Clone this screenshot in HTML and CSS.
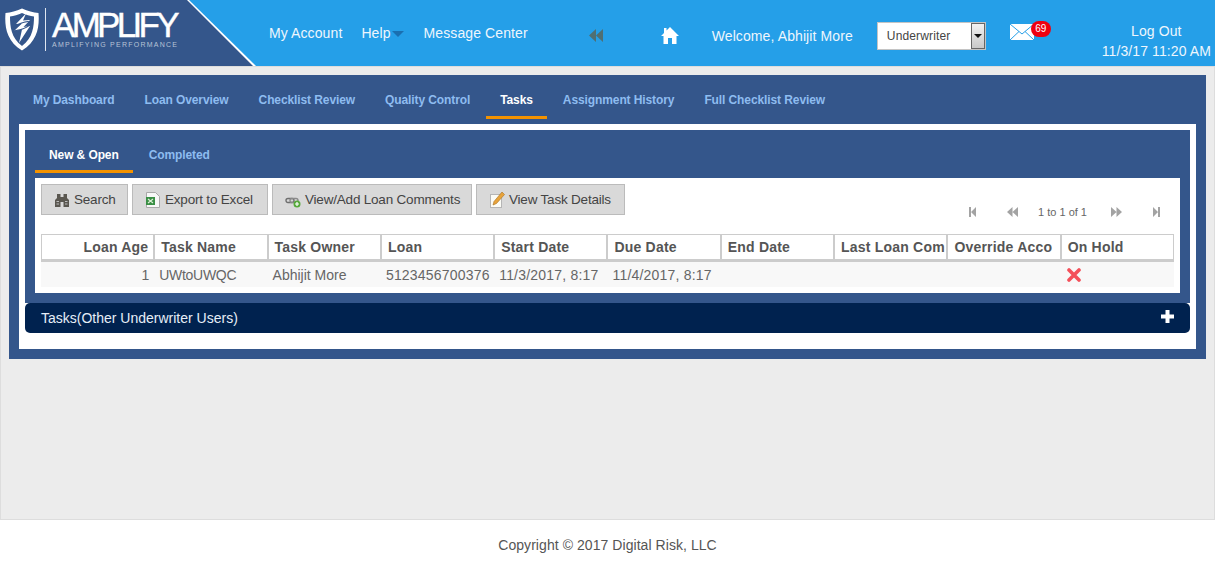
FILE: index.html
```html
<!DOCTYPE html>
<html lang="en">
<head>
    <meta charset="UTF-8">
    <meta name="viewport" content="width=device-width, initial-scale=1.0">
    <title>Amplify - Tasks</title>
    <link rel="stylesheet" href="styles.css">
</head>
<body>
    <header class="topbar">
        <div class="brand">
            <div class="brand-inner">
                <svg class="shield" viewBox="0 0 34 43" width="34" height="43">
                    <path d="M17 .5 C23 3 28 4.500 33.500 5 C34.500 18 33 33 17 42.500 C1 33 -.5 18 .5 5 C6 4.500 11 3 17 .5 Z" fill="#fff"/>
                    <path d="M17 5 C13 7 9 8 5 8.500 C5 18 6 30 17 38 C28 30 29 18 29 8.500 C25 8 21 7 17 5 Z" fill="#34568b"/>
                    <path d="M21 5.500 L11 16 L17 15.500 L9 23 L17 21.500 L14 35 L25 18 L18.500 19 L25 12 L18 12.500 Z" fill="#fff"/>
                    <ellipse cx="17" cy="18" rx="9" ry="3" transform="rotate(-22 17 18)" fill="none" stroke="#34568b" stroke-width="1"/>
                </svg>
                <span class="brand-rule"></span>
                <div class="brand-text">
                    <div class="wordmark">AMPLIFY</div>
                    <div class="tagline">AMPLIFYING PERFORMANCE</div>
                </div>
            </div>
        </div>
        <nav class="topnav">
            <a class="account">My Account</a>
            <a class="help">Help</a>
            <span class="help-arrow"></span>
            <a class="messages">Message Center</a>
        </nav>
        <svg class="collapse" viewBox="0 0 14 13" width="14" height="13">
            <path d="M7 0 V13 L0 6.500 Z M14 0 V13 L7 6.500 Z" fill="#4f6f73"/>
        </svg>
        <svg class="home" viewBox="0 0 18 17" width="18" height="17">
            <path d="M9 0 L18 9 H15.500 V17 H11 V11 H7 V17 H2.500 V9 H0 L3 6 V1 H5.500 V3.500 Z" fill="#fff"/>
        </svg>
        <span class="welcome">Welcome, Abhijit More</span>
        <div class="role-select">
            <span class="role-value">Underwriter</span>
            <span class="role-arrow"></span>
        </div>
        <div class="mail">
            <svg viewBox="0 0 24 16" width="24" height="16">
                <rect width="24" height="16" fill="#fff"/>
                <path d="M0 0 L12 10 L24 0 M0 16 L9 7.500 M24 16 L15 7.500" fill="none" stroke="#259fe8" stroke-width="1"/>
            </svg>
            <span class="badge">69</span>
        </div>
        <div class="session">
            <div class="logout">Log Out</div>
            <div class="clock">11/3/17 11:20 AM</div>
        </div>
    </header>

    <main class="page">
        <section class="panel">
            <ul class="tabs">
                <li>My Dashboard</li>
                <li>Loan Overview</li>
                <li>Checklist Review</li>
                <li>Quality Control</li>
                <li class="active">Tasks</li>
                <li>Assignment History</li>
                <li>Full Checklist Review</li>
            </ul>
            <div class="panel-body">
                <div class="subpanel">
                    <ul class="tabs subtabs">
                        <li class="active">New &amp; Open</li>
                        <li>Completed</li>
                    </ul>
                    <div class="content">
                        <div class="toolbar">
                            <button class="btn btn-search">
                                <svg viewBox="0 0 16 17" width="16" height="17">
                                    <path d="M3 3 H6.500 V6 H9.500 V3 H13 V7 L15 9 V16 H9.500 V11 H6.500 V16 H1 V9 L3 7 Z" fill="#5a5750"/>
                                    <path d="M2.500 10.500 H5 M11 10.500 H13.500 M2.500 13 H5 M11 13 H13.500" stroke="#bdbdbd" stroke-width="1"/>
                                </svg>
                                Search
                            </button>
                            <button class="btn btn-export">
                                <svg viewBox="0 0 16 17" width="16" height="17">
                                    <path d="M1.500 1.500 H10.500 L14.500 5.500 V16.500 H1.500 Z" fill="#f7f7f7" stroke="#a9a9a9"/>
                                    <rect x="1" y="6" width="9" height="8" fill="#3a8f45"/>
                                    <path d="M3 8 L8 12 M8 8 L3 12" stroke="#dff0d8" stroke-width="1.200"/>
                                </svg>
                                Export to Excel
                            </button>
                            <button class="btn btn-comments">
                                <svg viewBox="0 0 16 17" width="16" height="17">
                                    <rect x="1" y="7.500" width="8" height="4" rx="2" fill="none" stroke="#6e6e6e" stroke-width="1.400"/>
                                    <rect x="5" y="7.500" width="8" height="4" rx="2" fill="none" stroke="#8a8a8a" stroke-width="1.400"/>
                                    <circle cx="12" cy="13" r="3.500" fill="#55a93a"/>
                                    <path d="M12 11 V15 M10 13 H14" stroke="#fff" stroke-width="1.200"/>
                                </svg>
                                View/Add Loan Comments
                            </button>
                            <button class="btn btn-details">
                                <svg viewBox="0 0 16 17" width="16" height="17">
                                    <rect x="1.500" y="3.500" width="11" height="13" fill="#fbfbf5" stroke="#b5b5b5"/>
                                    <path d="M13 1 L15.500 3.500 L7.500 12.500 L4 14 L5 10.500 Z" fill="#e8a33a" stroke="#a8701f" stroke-width=".6"/>
                                </svg>
                                View Task Details
                            </button>
                            <div class="pager">
                                <svg viewBox="0 0 9 10" width="9" height="10"><path d="M1 0 H3 V10 H1 Z M8 0 V10 L3 5 Z" fill="#a3a3a3"/></svg>
                                <svg viewBox="0 0 11 10" width="11" height="10"><path d="M5.500 0 V10 L0 5 Z M11 0 V10 L5.500 5 Z" fill="#a3a3a3"/></svg>
                                <span class="pager-text">1 to 1 of 1</span>
                                <svg viewBox="0 0 11 10" width="11" height="10"><path d="M0 0 V10 L5.500 5 Z M5.500 0 V10 L11 5 Z" fill="#a3a3a3"/></svg>
                                <svg viewBox="0 0 9 10" width="9" height="10"><path d="M1 0 V10 L6 5 Z M6 0 H8 V10 H6 Z" fill="#a3a3a3"/></svg>
                            </div>
                        </div>
                        <table class="grid">
                            <thead>
                                <tr>
                                    <th class="num">Loan Age</th>
                                    <th>Task Name</th>
                                    <th>Task Owner</th>
                                    <th>Loan</th>
                                    <th>Start Date</th>
                                    <th>Due Date</th>
                                    <th>End Date</th>
                                    <th>Last Loan Com</th>
                                    <th>Override Acco</th>
                                    <th>On Hold</th>
                                </tr>
                            </thead>
                            <tbody>
                                <tr>
                                    <td class="num">1</td>
                                    <td class="tight">UWtoUWQC</td>
                                    <td>Abhijit More</td>
                                    <td class="wide">5123456700376</td>
                                    <td class="wide">11/3/2017, 8:17</td>
                                    <td class="wide">11/4/2017, 8:17</td>
                                    <td></td>
                                    <td></td>
                                    <td></td>
                                    <td>
                                        <svg class="hold-icon" viewBox="0 0 14 14" width="14" height="14">
                                            <path d="M2 2 L12 12 M12 2 L2 12" stroke="#f4505a" stroke-width="3.600" stroke-linecap="round"/>
                                        </svg>
                                    </td>
                                </tr>
                            </tbody>
                        </table>
                    </div>
                </div>
                <div class="accordion">
                    <span>Tasks(Other Underwriter Users)</span>
                    <svg viewBox="0 0 13 13" width="13" height="13">
                        <path d="M4.500 0 H8.500 V4.500 H13 V8.500 H8.500 V13 H4.500 V8.500 H0 V4.500 H4.500 Z" fill="#fff"/>
                    </svg>
                </div>
            </div>
        </section>
    </main>

    <footer class="footer">Copyright © 2017 Digital Risk, LLC</footer>
</body>
</html>
```

FILE: styles.css
```css
* {
    box-sizing: border-box;
}

html, body {
    height: 100%;
}

body {
    margin: 0;
    display: flex;
    flex-direction: column;
    font-family: "Liberation Sans", Arial, sans-serif;
    font-size: 14px;
    color: #555;
    background: #fff;
    overflow: hidden;
}

/* top bar */
.topbar {
    height: 66px;
    flex: none;
    display: flex;
    align-items: center;
    background: #259fe8;
    color: #eef6fd;
    letter-spacing: .1px;
}

.brand {
    width: 256px;
    height: 66px;
    flex: none;
    background: #fff;
    clip-path: polygon(0 0, 189px 0, 256px 66px, 0 66px);
}

.brand-inner {
    height: 66px;
    display: flex;
    align-items: flex-start;
    padding: 8px 0 0 5px;
    background: #34568b;
    clip-path: polygon(0 0, 187px 0, 253px 66px, 0 66px);
}

.brand-rule {
    width: 1px;
    height: 43px;
    margin: 0 6px 0 6px;
    background: #dfe6f0;
}

.wordmark {
    font-size: 35px;
    line-height: 33px;
    letter-spacing: -3.7px;
    color: #fff;
    -webkit-text-stroke: .4px #fff;
}

.tagline {
    font-size: 7px;
    line-height: 8px;
    letter-spacing: 1.25px;
    color: #b7c3d6;
}

.topnav {
    display: flex;
    align-items: center;
    margin-left: 13px;
    margin-top: -1px;
}

.help {
    margin-left: 19px;
}

.help-arrow {
    width: 0;
    height: 0;
    margin: 2px 0 0 1px;
    border-left: 6px solid transparent;
    border-right: 6px solid transparent;
    border-top: 6px solid #1a6fb0;
}

.messages {
    margin-left: 20px;
}

.collapse {
    margin-left: 61px;
    margin-top: 4px;
}

.home {
    margin-left: 58px;
    margin-top: 5px;
}

.welcome {
    margin-left: 33px;
    margin-top: 6px;
    white-space: nowrap;
}

.role-select {
    width: 109px;
    height: 28px;
    margin-left: 24px;
    margin-top: 5px;
    display: flex;
    align-items: center;
    justify-content: space-between;
    border: 1px solid #c4c4c4;
    background: #fff;
    color: #444;
    font-size: 12px;
    letter-spacing: .15px;
    padding-left: 9px;
}

.role-arrow {
    width: 14px;
    height: 26px;
    display: flex;
    align-items: center;
    justify-content: center;
    border: 1px solid #666;
    background: linear-gradient(#f2f2f2, #c8c8c8);
}

.role-arrow::after {
    content: "";
    border-left: 4px solid transparent;
    border-right: 4px solid transparent;
    border-top: 4px solid #111;
}

.mail {
    position: relative;
    width: 24px;
    height: 16px;
    margin-left: 24px;
    margin-top: -3px;
}

.mail svg {
    display: block;
}

.badge {
    position: absolute;
    left: 21px;
    top: -3px;
    width: 20px;
    height: 16px;
    border-radius: 8px;
    background: #f0000f;
    color: #fff;
    font-size: 10px;
    line-height: 16px;
    text-align: center;
}

.session {
    margin-left: auto;
    margin-right: 4px;
    text-align: center;
    margin-top: 15px;
}

.logout {
    line-height: 20px;
}

.clock {
    line-height: 20px;
    white-space: nowrap;
}

/* main area */
.page {
    flex: 1;
    min-height: 0;
    padding: 8px;
    background: #ececec;
    border: 1px solid #ddd;
}

.panel {
    background: #34568b;
    padding: 0 10px 10px;
}

.tabs {
    display: flex;
    gap: 2px;
    margin: 0;
    padding: 0;
    height: 49px;
    list-style: none;
    align-items: flex-end;
    font-size: 12px;
    font-weight: bold;
    letter-spacing: -.1px;
    color: #8ebcf0;
}

.tabs li {
    padding: 0 14px 9px;
    margin-bottom: 5px;
    line-height: 14px;
    border-bottom: 3px solid transparent;
}

.tabs li.active {
    color: #fff;
    border-bottom-color: #f39200;
}

.panel-body {
    background: #fff;
    padding: 6px 6px 16px;
}

.subpanel {
    background: #34568b;
    padding: 0 10px 10px;
}

.subtabs {
    height: 48px;
}

.subtabs li {
    padding-bottom: 8px;
}

.content {
    background: #fff;
    padding: 6px;
}

.toolbar {
    display: flex;
    gap: 4px;
    height: 50px;
    align-items: flex-start;
}

.btn {
    height: 31px;
    display: flex;
    align-items: center;
    gap: 4px;
    padding: 0 0 0 12px;
    border: 1px solid #bbb;
    background: #d9d9d9;
    color: #444;
    font-family: inherit;
    font-size: 13.500px;
    letter-spacing: -.2px;
    white-space: nowrap;
}

.btn-search {
    width: 87px;
}

.btn-export {
    width: 136px;
}

.btn-comments {
    width: 200px;
}

.btn-details {
    width: 149px;
}

.pager {
    margin-left: auto;
    margin-right: 13px;
    margin-top: 22px;
    display: flex;
    align-items: center;
    font-size: 11px;
    color: #666;
}

.pager svg:nth-child(2) {
    margin-left: 30px;
}

.pager-text {
    margin: 0 24px 0 20px;
}

.pager svg:nth-child(5) {
    margin-left: 30px;
}

.grid {
    width: 1133px;
    table-layout: fixed;
    border-collapse: separate;
    border-spacing: 0;
}

.grid th {
    height: 28px;
    padding: 0 5px 0 6px;
    border: 1px solid #ccc;
    border-bottom-width: 3px;
    background: #fff;
    color: #555;
    font-size: 14px;
    letter-spacing: .2px;
    text-align: left;
    white-space: nowrap;
}

.grid td {
    height: 25px;
    padding: 0 5px;
    background: #f8f8f8;
    color: #666;
    white-space: nowrap;
}

.grid .num {
    text-align: right;
}

.grid .tight {
    letter-spacing: -.3px;
}

.grid .wide {
    letter-spacing: .2px;
}

.hold-icon {
    display: block;
    margin: 1px 0 0 1px;
}

.accordion {
    height: 30px;
    display: flex;
    align-items: center;
    justify-content: space-between;
    padding: 0 16px 0 16px;
    background: #00224f;
    border-radius: 5px;
    color: #e6eef7;
}

.accordion svg {
    margin-top: -4px;
}

.footer {
    height: 43px;
    flex: none;
    display: flex;
    align-items: center;
    justify-content: center;
    padding-top: 7px;
    background: #fff;
    color: #555;
    letter-spacing: .06px;
}
```
